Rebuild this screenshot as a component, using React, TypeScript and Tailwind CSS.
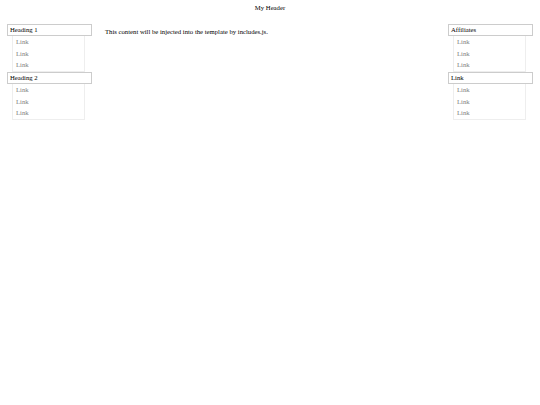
const linkCls = 'block h-[11.5px] pl-[3px] leading-[11.5px] text-[#808080]'

function Group({ title, links }: { title: string; links: string[] }) {
  return (
    <div>
      <div className="h-[12px] border border-[#ccc] pl-[2px] leading-[10px] text-black">{title}</div>
      <div className="ml-[5px] mr-[7px] border-x border-b border-[#eee] pb-[0.5px]">
        {links.map((l, i) => (
          <a key={i} className={linkCls}>
            {l}
          </a>
        ))}
      </div>
    </div>
  )
}

function Sidebar({ groups }: { groups: { title: string; links: string[] }[] }) {
  return (
    <div className="flex w-[85px] shrink-0 flex-col">
      {groups.map((g) => (
        <Group key={g.title} title={g.title} links={g.links} />
      ))}
    </div>
  )
}

export default function App() {
  return (
    <div className="min-h-[405px] bg-white text-[6.7px] font-['Liberation_Serif',serif] text-black antialiased">
      <header className="pt-[3px] text-center leading-[9px]">My Header</header>
      <div className="flex px-[7px] pt-[12px]">
        <Sidebar
          groups={[
            { title: 'Heading 1', links: ['Link', 'Link', 'Link'] },
            { title: 'Heading 2', links: ['Link', 'Link', 'Link'] },
          ]}
        />
        <main className="flex-1 pl-[13px] pt-[3px] leading-[9px]">
          This content will be injected into the template by includes.js.
        </main>
        <Sidebar
          groups={[
            { title: 'Affiliates', links: ['Link', 'Link', 'Link'] },
            { title: 'Link', links: ['Link', 'Link', 'Link'] },
          ]}
        />
      </div>
    </div>
  )
}
